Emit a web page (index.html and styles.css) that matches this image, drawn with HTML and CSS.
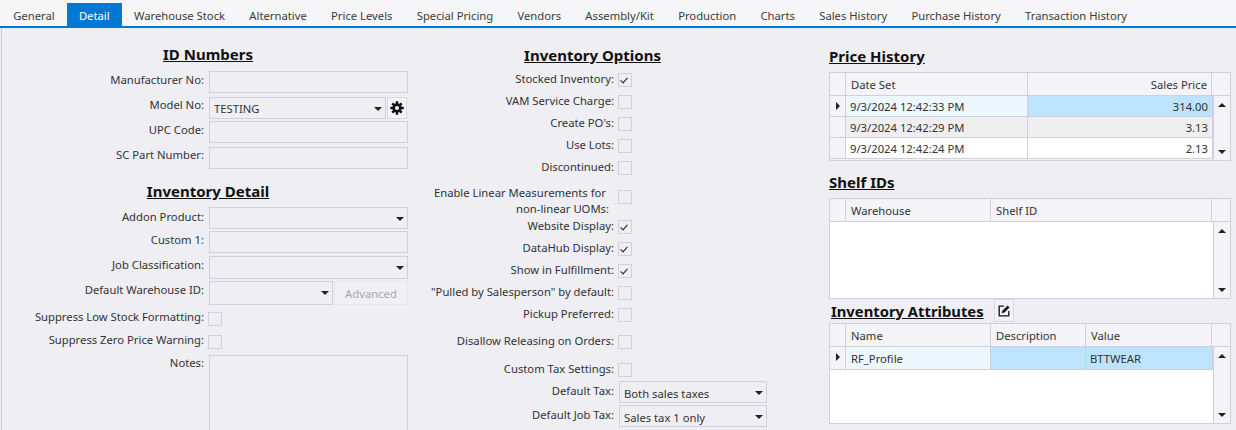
FILE: index.html
```html
<!DOCTYPE html>
<html lang="en">
<head>
  <meta charset="UTF-8">
  <title>Inventory Detail</title>
  <link rel="stylesheet" href="styles.css">
</head>
<body>

<nav class="tabs">
  <a class="tab">General</a>
  <a class="tab tab-active">Detail</a>
  <a class="tab">Warehouse Stock</a>
  <a class="tab">Alternative</a>
  <a class="tab">Price Levels</a>
  <a class="tab">Special Pricing</a>
  <a class="tab">Vendors</a>
  <a class="tab">Assembly/Kit</a>
  <a class="tab">Production</a>
  <a class="tab">Charts</a>
  <a class="tab">Sales History</a>
  <a class="tab">Purchase History</a>
  <a class="tab">Transaction History</a>
</nav>

<main class="panel">
  <!-- Left column -->
  <section class="col-left">
    <h2 class="title">ID Numbers</h2>
    <div class="row row-first">
      <label class="lbl">Manufacturer No:</label>
      <div class="box"></div>
    </div>
    <div class="row mt-4">
      <label class="lbl lbl-flush">Model No:</label>
      <div class="box box-select box-model">TESTING<span class="arrow"></span></div>
      <button class="icon-btn" aria-label="Settings">
        <svg width="14" height="14" viewBox="0 0 14 14">
          <circle cx="7" cy="7" r="3.4" fill="none" stroke="#111" stroke-width="2.6"/>
          <g stroke="#111" stroke-width="2.5">
            <path d="M7 0.3V3M7 11V13.7M0.3 7H3M11 7H13.7M2.3 2.3L4.1 4.1M9.9 9.9L11.7 11.7M11.7 2.3L9.9 4.1M4.1 9.9L2.3 11.7"/>
          </g>
        </svg>
      </button>
    </div>
    <div class="row mt-2">
      <label class="lbl">UPC Code:</label>
      <div class="box"></div>
    </div>
    <div class="row mt-4">
      <label class="lbl lbl-flush">SC Part Number:</label>
      <div class="box"></div>
    </div>

    <h2 class="title title-detail">Inventory Detail</h2>
    <div class="row row-detail">
      <label class="lbl lbl-low">Addon Product:</label>
      <div class="box box-select"><span class="arrow"></span></div>
    </div>
    <div class="row mt-2">
      <label class="lbl">Custom 1:</label>
      <div class="box"></div>
    </div>
    <div class="row mt-3 row-23">
      <label class="lbl">Job Classification:</label>
      <div class="box box-select"><span class="arrow"></span></div>
    </div>
    <div class="row mt-2 row-24">
      <label class="lbl">Default Warehouse ID:</label>
      <div class="box box-select box-wh"><span class="arrow"></span></div>
      <button class="btn-disabled" disabled>Advanced</button>
    </div>
    <div class="row row-check row-low">
      <label class="lbl">Suppress Low Stock Formatting:</label>
      <span class="check check-left"></span>
    </div>
    <div class="row row-check mt-1">
      <label class="lbl">Suppress Zero Price Warning:</label>
      <span class="check check-left"></span>
    </div>
    <div class="row row-notes">
      <label class="lbl lbl-flush">Notes:</label>
      <div class="box box-notes"></div>
    </div>
  </section>

  <!-- Middle column -->
  <section class="col-mid">
    <h2 class="title">Inventory Options</h2>
    <div class="opt opt-first"><label class="lbl-opt">Stocked Inventory:</label><span class="check checked"></span></div>
    <div class="opt"><label class="lbl-opt">VAM Service Charge:</label><span class="check"></span></div>
    <div class="opt"><label class="lbl-opt">Create PO's:</label><span class="check"></span></div>
    <div class="opt"><label class="lbl-opt">Use Lots:</label><span class="check"></span></div>
    <div class="opt"><label class="lbl-opt">Discontinued:</label><span class="check"></span></div>
    <div class="opt opt-wrap">
      <label class="lbl-opt lbl-two"><span class="line-one">Enable Linear Measurements for</span><br>non-linear UOMs:</label>
      <span class="check"></span>
    </div>
    <div class="opt"><label class="lbl-opt">Website Display:</label><span class="check checked"></span></div>
    <div class="opt"><label class="lbl-opt">DataHub Display:</label><span class="check checked"></span></div>
    <div class="opt"><label class="lbl-opt">Show in Fulfillment:</label><span class="check checked"></span></div>
    <div class="opt"><label class="lbl-opt">"Pulled by Salesperson" by default:</label><span class="check"></span></div>
    <div class="opt"><label class="lbl-opt">Pickup Preferred:</label><span class="check"></span></div>
    <div class="opt opt-disallow"><label class="lbl-opt">Disallow Releasing on Orders:</label><span class="check"></span></div>
    <div class="opt opt-tax"><label class="lbl-opt">Custom Tax Settings:</label><span class="check"></span></div>
    <div class="opt opt-select opt-default-tax">
      <label class="lbl-opt">Default Tax:</label>
      <div class="box box-select box-tax">Both sales taxes<span class="arrow"></span></div>
    </div>
    <div class="opt opt-select mt-2">
      <label class="lbl-opt">Default Job Tax:</label>
      <div class="box box-select box-tax">Sales tax 1 only<span class="arrow"></span></div>
    </div>
  </section>

  <!-- Right column -->
  <section class="col-right">
    <h2 class="title-side title-price">Price History</h2>
    <div class="grid grid-price">
      <div class="grid-head">
        <div class="cell-mark"></div>
        <div class="cell col-date">Date Set</div>
        <div class="cell col-fill cell-num">Sales Price</div>
        <div class="cell-end"></div>
      </div>
      <div class="grid-body">
        <div class="grid-rows">
          <div class="grid-row">
            <div class="cell-mark"><span class="pointer"></span></div>
            <div class="cell col-date cell-current">9/3/2024 12:42:33 PM</div>
            <div class="cell col-fill cell-num cell-selected">314.00</div>
          </div>
          <div class="grid-row row-alt">
            <div class="cell-mark"></div>
            <div class="cell col-date">9/3/2024 12:42:29 PM</div>
            <div class="cell col-fill cell-num">3.13</div>
          </div>
          <div class="grid-row row-plain">
            <div class="cell-mark"></div>
            <div class="cell col-date">9/3/2024 12:42:24 PM</div>
            <div class="cell col-fill cell-num">2.13</div>
          </div>
        </div>
        <div class="scroll"><span class="up"></span><span class="down"></span></div>
      </div>
    </div>

    <h2 class="title-side title-shelf">Shelf IDs</h2>
    <div class="grid grid-shelf">
      <div class="grid-head">
        <div class="cell-mark"></div>
        <div class="cell col-name">Warehouse</div>
        <div class="cell col-fill">Shelf ID</div>
        <div class="cell-end"></div>
      </div>
      <div class="grid-body">
        <div class="grid-rows grid-empty"></div>
        <div class="scroll"><span class="up"></span><span class="down"></span></div>
      </div>
    </div>

    <div class="attr-head">
      <h2 class="title-side">Inventory Attributes</h2>
      <button class="icon-btn" aria-label="Edit">
        <svg width="12" height="12" viewBox="0 0 12 12" fill="none" stroke="#111" stroke-width="1.3">
          <path d="M6 1.2H1.2V10.8H10.8V6"/>
          <path d="M4.2 7.8L4.6 5.8L9.6 0.9L11.1 2.4L6.2 7.4Z" fill="#111" stroke-width="0.6"/>
        </svg>
      </button>
    </div>
    <div class="grid grid-attr">
      <div class="grid-head">
        <div class="cell-mark"></div>
        <div class="cell col-name">Name</div>
        <div class="cell col-desc">Description</div>
        <div class="cell col-fill">Value</div>
        <div class="cell-end"></div>
      </div>
      <div class="grid-body">
        <div class="grid-rows grid-empty">
          <div class="grid-row">
            <div class="cell-mark"><span class="pointer"></span></div>
            <div class="cell col-name cell-current cell-profile">RF_Profile</div>
            <div class="cell col-desc cell-selected"></div>
            <div class="cell col-fill cell-selected">BTTWEAR</div>
          </div>
        </div>
        <div class="scroll"><span class="up"></span><span class="down"></span></div>
      </div>
    </div>
  </section>
</main>

</body>
</html>
```

FILE: styles.css
```css
/* Base */
html, body {
  margin: 0;
  height: 430px;
  overflow: hidden;
}
body {
  font-family: "Noto Sans", "Open Sans", sans-serif;
  font-size: 11.25px;
  line-height: 16px;
  color: #333;
  background: #eeeef3;
}
button {
  font: inherit;
  padding: 0;
}

/* Tabs */
.tabs {
  display: flex;
  height: 26px;
  padding: 0 0 0 1px;
  background: #f6f6f9;
  border-bottom: 2px solid #0078d4;
  align-items: flex-end;
}
.tab {
  height: 23px;
  line-height: 26px;
  padding: 0 12.15px;
  color: #3a3a3a;
  white-space: nowrap;
}
.tab-active {
  background: #0078d4;
  color: #fff;
}

/* Main panel */
.panel {
  display: flex;
  height: 402px;
  margin-left: 1px;
  border-left: 1px solid #c9c9d6;
  overflow: hidden;
}
.col-left {
  width: 416px;
  flex: none;
}
.col-mid {
  width: 349px;
  flex: none;
}
.col-right {
  width: 402px;
  flex: none;
  margin-left: 62px;
}

/* Section titles */
.title,
.title-side {
  margin: 0;
  font-size: 15px;
  line-height: 20px;
  font-weight: 700;
  color: #111;
  text-decoration: underline;
}
.title {
  padding-top: 17px;
  text-align: center;
}
.col-left .title {
  padding-right: 4px;
  padding-top: 16px;
}
.col-left .title-detail {
  padding-top: 12px;
}
.title-side {
  white-space: nowrap;
}
.title-price {
  padding-top: 18px;
}
.title-shelf {
  padding-top: 11px;
}

/* Left column rows */
.row {
  display: flex;
  height: 22px;
}
.row-first {
  margin-top: 7px;
}
.row-detail {
  margin-top: 6px;
}
.row-23 {
  height: 23px;
}
.row-24 {
  height: 24px;
}
.row-check {
  height: 14px;
}
.row-low {
  margin-top: 4px;
  padding-top: 3px;
}
.row-notes {
  height: 100px;
  margin-top: 6px;
}
.mt-1 {
  margin-top: 9px;
}
.mt-2 {
  margin-top: 2px;
}
.mt-3 {
  margin-top: 3px;
}
.mt-4 {
  margin-top: 4px;
}
.lbl {
  width: 202px;
  flex: none;
  margin-right: 5px;
  padding-top: 1px;
  text-align: right;
  white-space: nowrap;
}
.row-check .lbl {
  padding-top: 0;
  margin-top: -3px;
}
.lbl-flush {
  padding-top: 0;
}
.lbl-low {
  padding-top: 2px;
}

/* Inputs */
.box {
  position: relative;
  box-sizing: border-box;
  width: 199px;
  height: 100%;
  border: 1px solid #cfcfdf;
  background: #eeeef3;
}
.box-select {
  padding: 3px 0 0 4px;
  line-height: 17px;
}
.box-model {
  width: 177px;
  padding-top: 2px;
}
.box-wh {
  width: 124px;
}
.box-notes {
  height: 100px;
}
.box-tax {
  width: 148px;
  height: 22px;
}
.arrow {
  position: absolute;
  right: 3px;
  top: 9px;
  border-left: 4px solid transparent;
  border-right: 4px solid transparent;
  border-top: 4px solid #222;
}
.icon-btn {
  box-sizing: border-box;
  display: flex;
  align-items: center;
  justify-content: center;
  width: 20px;
  height: 22px;
  margin-left: 1px;
  border: 1px solid #d8d8e4;
  background: #f3f3f7;
}
.btn-disabled {
  box-sizing: border-box;
  width: 74px;
  height: 24px;
  margin-left: 1px;
  padding-top: 1px;
  border: 1px solid #e6e6ec;
  background: #f0f0f4;
  color: #a6a6b0;
}

/* Checkboxes */
.check {
  position: relative;
  box-sizing: border-box;
  display: block;
  flex: none;
  width: 14px;
  height: 14px;
  margin-top: 2px;
  border: 1px solid #cfcfdf;
}
.check-left {
  margin: 0 0 0 -1px;
}
.checked::after {
  content: "";
  position: absolute;
  left: 3px;
  top: 1.5px;
  width: 3px;
  height: 6px;
  border-right: 1.4px solid #222;
  border-bottom: 1.4px solid #222;
  transform: rotate(42deg);
}

/* Middle column rows */
.opt {
  display: flex;
  height: 22px;
}
.opt-first {
  margin-top: 6px;
}
.lbl-opt {
  width: 196px;
  flex: none;
  margin-right: 4px;
  text-align: right;
  white-space: nowrap;
}
.lbl-two {
  padding-right: 5px;
  width: 191px;
}
.line-one {
  margin-right: 3px;
}
.opt-wrap {
  height: 33px;
  margin-top: 4px;
}
.opt-wrap .check {
  margin-top: 5px;
}
.opt-disallow {
  margin-top: 5px;
}
.opt-tax {
  margin-top: 6px;
}
.opt-select .lbl-opt {
  padding-top: 2px;
}
.opt-select .box {
  margin-left: 1px;
  flex: none;
}
.opt-default-tax {
  margin-top: -2px;
}

/* Data grids */
.grid {
  box-sizing: border-box;
  display: flex;
  flex-direction: column;
  width: 402px;
  border: 1px solid #cfcfdf;
  background: #fff;
}
.grid-price {
  height: 89px;
  margin-top: 6px;
  background: #f3f3f7;
}
.grid-shelf {
  height: 101px;
  margin-top: 6px;
}
.grid-attr {
  height: 101px;
}
.attr-head {
  display: flex;
  height: 24px;
  padding-left: 2px;
}
.attr-head .title-side {
  margin-top: 2px;
  font-size: 14.8px;
}
.attr-head .icon-btn {
  height: 23px;
  margin-left: 10px;
}
.grid-head {
  display: flex;
  flex: none;
  height: 22px;
  background: #f4f4f8;
  border-bottom: 1px solid #cfcfdf;
}
.grid-body {
  display: flex;
  flex: 1;
  min-height: 0;
}
.grid-rows {
  flex: none;
  width: 383px;
}
.grid-empty {
  background: #fff;
}
.grid-row {
  display: flex;
  height: 20px;
  border-bottom: 1px solid #cfcfdf;
}
.grid-attr .grid-row {
  height: 22px;
}
.grid-attr .grid-row .cell {
  padding-top: 4px;
}
.grid-attr .grid-row .cell-profile {
  padding-left: 5px;
}
.row-alt {
  background: #efeff0;
}
.row-plain {
  background: #fff;
}
.cell-mark {
  position: relative;
  flex: none;
  width: 15px;
  border-right: 1px solid #cfcfdf;
  background: #f4f4f8;
}
.cell {
  box-sizing: border-box;
  flex: none;
  padding: 3px 4px 0 4px;
  border-right: 1px solid #cfcfdf;
  white-space: nowrap;
}
.grid-head .cell {
  padding: 4px 4px 0 5px;
}
.col-date {
  width: 182px;
}
.col-name {
  width: 145px;
}
.col-desc {
  width: 95px;
}
.col-fill {
  flex: 1;
}
.cell-num {
  text-align: right;
}
.cell-end {
  flex: none;
  width: 18px;
}
.cell-current {
  background: #ecf7fe;
}
.cell-selected {
  background: #bde3fd;
}
.pointer {
  position: absolute;
  left: 6px;
  top: 6px;
  border-top: 4px solid transparent;
  border-bottom: 4px solid transparent;
  border-left: 4px solid #222;
}

/* Scrollbar */
.scroll {
  position: relative;
  flex: 1;
  border-left: 1px solid #cfcfdf;
  background: #f4f4f8;
}
.up,
.down {
  position: absolute;
  left: 4px;
  border-left: 4px solid transparent;
  border-right: 4px solid transparent;
}
.up {
  top: 7px;
  border-bottom: 4px solid #222;
}
.down {
  bottom: 6px;
  border-top: 4px solid #222;
}
```
